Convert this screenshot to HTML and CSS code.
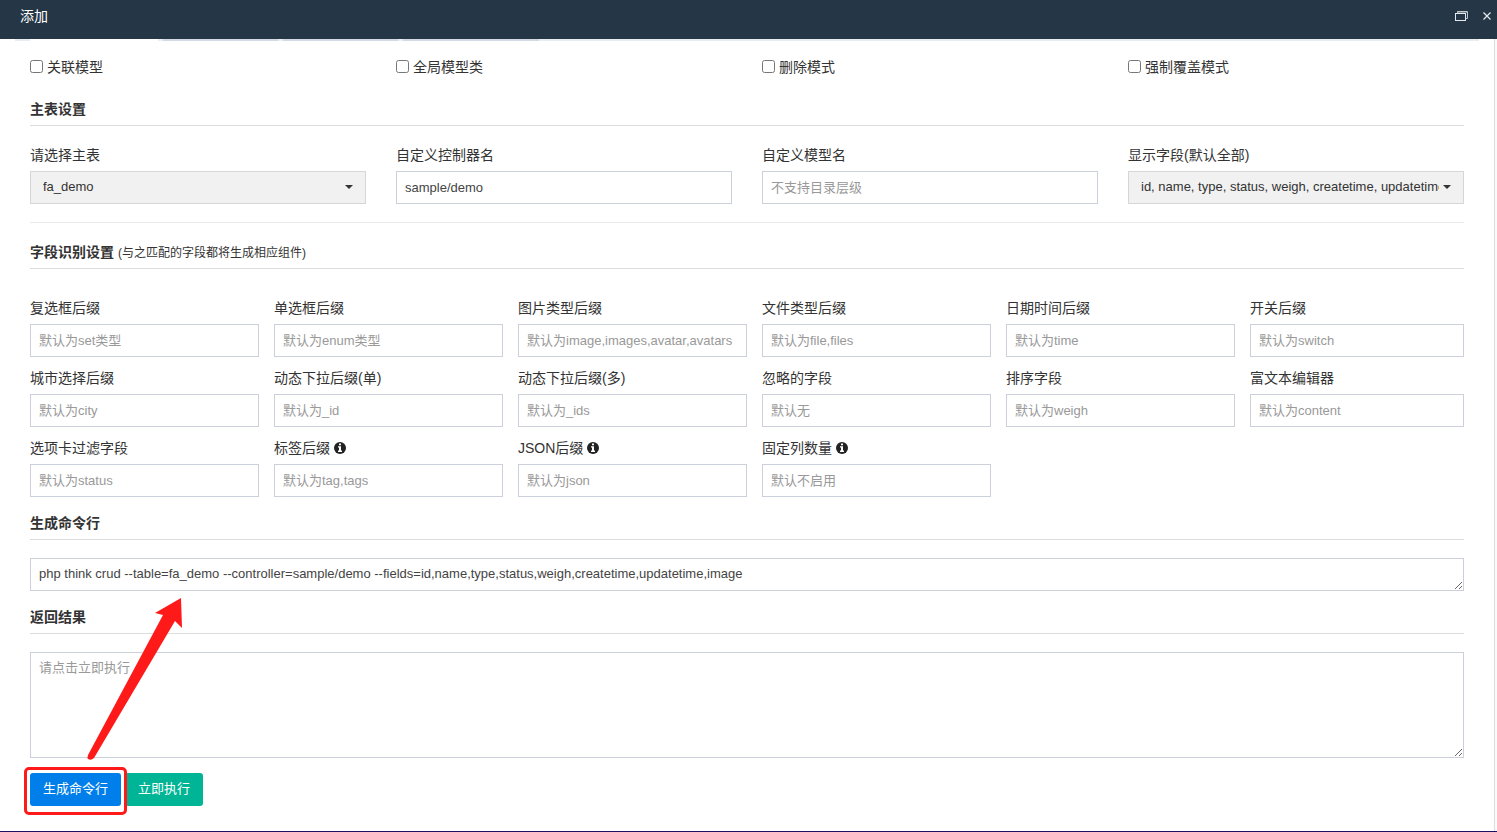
FILE: index.html
```html
<!DOCTYPE html>
<html lang="zh-CN">
<head>
<meta charset="utf-8">
<title>添加</title>
<link rel="stylesheet" href="styles.css">
</head>
<body>
<div class="dialog">
  <header class="titlebar">
    <h1 class="titlebar-text">添加</h1>
    <div class="titlebar-actions">
      <button type="button" class="icon-btn" aria-label="还原">
        <svg width="14" height="10" viewBox="0 0 14 10" fill="none"><path d="M2.500 2V.5H12.500V7.500H11" stroke="#c3cad0"/><path d="M3 1.500H12" stroke="#73808a"/><rect x=".5" y="2.500" width="10" height="7" stroke="#e6e9eb"/></svg>
      </button>
      <button type="button" class="icon-btn" aria-label="关闭">
        <svg width="8" height="8" viewBox="0 0 8 8"><path d="M.5.5l7 7M7.500.5l-7 7" stroke="#e6e9eb" stroke-width="1.200"/></svg>
      </button>
    </div>
  </header>

  <nav class="tabs" aria-hidden="true">
    <span class="tab tab-active"></span><span class="tab tab-a"></span><span class="tab tab-a"></span><span class="tab tab-b"></span>
  </nav>

  <form class="form">
    <div class="grid-4 checks">
      <label class="check"><input type="checkbox">关联模型</label>
      <label class="check"><input type="checkbox">全局模型类</label>
      <label class="check"><input type="checkbox">删除模式</label>
      <label class="check"><input type="checkbox">强制覆盖模式</label>
    </div>

    <h2 class="legend">主表设置</h2>
    <div class="grid-4 main-table">
      <div class="field">
        <label for="table">请选择主表</label>
        <div class="picker"><select id="table"><option>fa_demo</option></select></div>
      </div>
      <div class="field">
        <label for="controller">自定义控制器名</label>
        <input class="control" id="controller" type="text" value="sample/demo">
      </div>
      <div class="field">
        <label for="model">自定义模型名</label>
        <input class="control" id="model" type="text" placeholder="不支持目录层级">
      </div>
      <div class="field">
        <label for="fields">显示字段(默认全部)</label>
        <div class="picker"><select id="fields"><option>id, name, type, status, weigh, createtime, updatetime, image</option></select></div>
      </div>
    </div>

    <h2 class="legend">字段识别设置 <small>(与之匹配的字段都将生成相应组件)</small></h2>
    <div class="grid-6">
      <div class="field"><label for="f1">复选框后缀</label><input class="control" id="f1" type="text" placeholder="默认为set类型"></div>
      <div class="field"><label for="f2">单选框后缀</label><input class="control" id="f2" type="text" placeholder="默认为enum类型"></div>
      <div class="field"><label for="f3">图片类型后缀</label><input class="control" id="f3" type="text" placeholder="默认为image,images,avatar,avatars"></div>
      <div class="field"><label for="f4">文件类型后缀</label><input class="control" id="f4" type="text" placeholder="默认为file,files"></div>
      <div class="field"><label for="f5">日期时间后缀</label><input class="control" id="f5" type="text" placeholder="默认为time"></div>
      <div class="field"><label for="f6">开关后缀</label><input class="control" id="f6" type="text" placeholder="默认为switch"></div>
      <div class="field"><label for="f7">城市选择后缀</label><input class="control" id="f7" type="text" placeholder="默认为city"></div>
      <div class="field"><label for="f8">动态下拉后缀(单)</label><input class="control" id="f8" type="text" placeholder="默认为_id"></div>
      <div class="field"><label for="f9">动态下拉后缀(多)</label><input class="control" id="f9" type="text" placeholder="默认为_ids"></div>
      <div class="field"><label for="f10">忽略的字段</label><input class="control" id="f10" type="text" placeholder="默认无"></div>
      <div class="field"><label for="f11">排序字段</label><input class="control" id="f11" type="text" placeholder="默认为weigh"></div>
      <div class="field"><label for="f12">富文本编辑器</label><input class="control" id="f12" type="text" placeholder="默认为content"></div>
      <div class="field"><label for="f13">选项卡过滤字段</label><input class="control" id="f13" type="text" placeholder="默认为status"></div>
      <div class="field"><label for="f14">标签后缀 <svg class="info" viewBox="0 0 12 12"><circle cx="6" cy="6" r="6"/><path d="M5 1.500h2v1.700H5zM4 4.200h3v4.300h1V10H4V8.500h1V5.600H4z" fill="#fff"/></svg></label><input class="control" id="f14" type="text" placeholder="默认为tag,tags"></div>
      <div class="field"><label for="f15">JSON后缀 <svg class="info" viewBox="0 0 12 12"><circle cx="6" cy="6" r="6"/><path d="M5 1.500h2v1.700H5zM4 4.200h3v4.300h1V10H4V8.500h1V5.600H4z" fill="#fff"/></svg></label><input class="control" id="f15" type="text" placeholder="默认为json"></div>
      <div class="field"><label for="f16">固定列数量 <svg class="info" viewBox="0 0 12 12"><circle cx="6" cy="6" r="6"/><path d="M5 1.500h2v1.700H5zM4 4.200h3v4.300h1V10H4V8.500h1V5.600H4z" fill="#fff"/></svg></label><input class="control" id="f16" type="text" placeholder="默认不启用"></div>
    </div>

    <h2 class="legend" id="cmd-title">生成命令行</h2>
    <textarea class="control area area-command" aria-labelledby="cmd-title" rows="1">php think crud --table=fa_demo --controller=sample/demo --fields=id,name,type,status,weigh,createtime,updatetime,image</textarea>

    <h2 class="legend" id="result-title">返回结果</h2>
    <textarea class="control area area-result" aria-labelledby="result-title" rows="5" placeholder="请点击立即执行"></textarea>

    <div class="actions">
      <span class="marked">
        <button type="button" class="btn btn-blue">生成命令行</button>
        <svg class="arrow" width="96" height="164" viewBox="0 0 96 164"><path d="M94 1L95 31 88 24 7 161Q4 164 1 162 0 161 1 158L76 18 68 16Z" fill="#ff1a1a"/></svg>
      </span>
      <button type="button" class="btn btn-green">立即执行</button>
    </div>
  </form>
</div>
</body>
</html>
```
FILE: styles.css
```css
* {
  box-sizing: border-box;
}

body {
  margin: 0;
  background: #fff;
  color: #333;
  font: 14px/20px "Liberation Sans", "Noto Sans CJK SC", sans-serif;
}

button,
input,
select,
textarea {
  font-family: inherit;
}

.dialog {
  display: flex;
  flex-direction: column;
  min-height: 100vh;
  border-bottom: 1px solid #1d1060;
  background: linear-gradient(to left, #fafafa 2px, #ddd 2px, #ddd 3px, #fff 3px);
}

.titlebar {
  display: flex;
  align-items: center;
  justify-content: space-between;
  height: 39px;
  padding: 0 6px 7px 20px;
  background: #253746;
}

.titlebar-text {
  margin: 0;
  color: #fff;
  font-size: 14px;
  font-weight: 400;
  line-height: 20px;
}

.titlebar-actions {
  display: flex;
  align-items: center;
  gap: 14px;
}

.icon-btn {
  display: flex;
  padding: 0;
  border: 0;
  background: none;
}

.tabs {
  display: flex;
  gap: 5px;
  height: 2px;
  margin: 0 18px 0 15px;
  padding-left: 15px;
  background: #e8edf2;
}

.tab {
  width: 115px;
  background: #d3dae3;
}

.tab-active {
  width: 128px;
  background: #fff;
}

.tab-b {
  width: 136px;
}

.form {
  padding: 16px 33px 24px 30px;
}

.grid-4 {
  display: grid;
  grid-template-columns: repeat(4, minmax(0, 1fr));
  gap: 30px;
}

.checks {
  padding-bottom: 6px;
}

.check {
  display: flex;
  align-items: center;
  gap: 4px;
}

.check input {
  width: 13px;
  height: 13px;
  margin: 0 0 1px;
}

.legend {
  margin: 16px 0 18px;
  padding-bottom: 6px;
  border-bottom: 1px solid #ddd;
  font-size: 14px;
  font-weight: 700;
  line-height: 20px;
}

.legend small {
  font-size: 12px;
  font-weight: 400;
  line-height: 12px;
}

.main-table {
  margin-bottom: 19px;
  padding: 1px 0 18px;
  border-bottom: 1px solid #e9e9e9;
}

.grid-6 {
  display: grid;
  grid-template-columns: repeat(5, minmax(0, 229fr)) minmax(0, 214fr);
  gap: 11px 15px;
  padding-top: 11px;
}

.field {
  display: flex;
  flex-direction: column;
  gap: 6px;
}

.info {
  width: 12px;
  height: 12px;
  fill: #222;
  vertical-align: -1px;
}

.control {
  display: block;
  width: 100%;
  height: 33px;
  padding: 6px 8px;
  border: 1px solid #ccd0da;
  border-radius: 0;
  background: #fff;
  color: #444;
  font-size: 13px;
  line-height: 19px;
}

.control::placeholder {
  color: #999;
}

.picker {
  position: relative;
}

.picker select {
  display: block;
  width: 100%;
  height: 33px;
  padding: 0 24px 2px 12px;
  border: 1px solid #d5d6d8;
  border-radius: 0;
  background: #f1f1f1;
  color: #333;
  font-size: 13px;
  appearance: none;
}

.picker::after {
  content: "";
  position: absolute;
  top: 14px;
  right: 13px;
  border: 4px solid transparent;
  border-top-color: #333;
  border-bottom: 0;
  pointer-events: none;
}

.area {
  padding-top: 5px;
  resize: vertical;
}

.area-result {
  height: 106px;
}

.actions {
  display: flex;
  gap: 4px;
  margin-top: 15px;
}

.marked {
  position: relative;
  z-index: 1;
}

.marked::after {
  content: "";
  position: absolute;
  inset: -6px -6px -9px;
  border: 3px solid #ff1a1a;
  border-radius: 5px;
  pointer-events: none;
}

.arrow {
  position: absolute;
  left: 57px;
  bottom: 45px;
  pointer-events: none;
}

.btn {
  display: block;
  height: 33px;
  padding: 0 13px 2px;
  border: 0;
  border-radius: 3px;
  color: #fff;
  font-size: 13px;
  line-height: 19px;
}

.btn-blue {
  background: #007fea;
}

.btn-green {
  background: #00b496;
}
```
